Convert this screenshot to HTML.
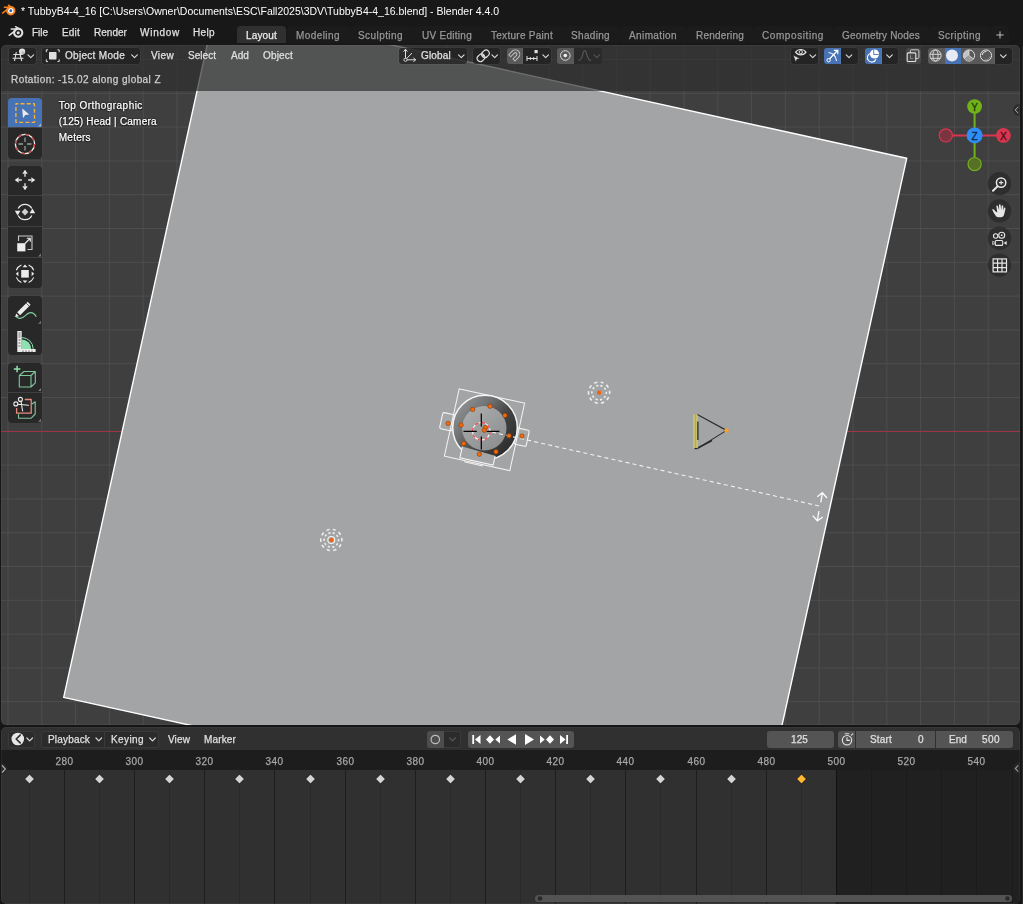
<!DOCTYPE html>
<html><head><meta charset="utf-8"><title>Blender</title>
<style>
*{box-sizing:border-box;margin:0;padding:0}
html,body{width:1023px;height:904px;overflow:hidden;background:#161616}
body{position:relative;font-family:"Liberation Sans",sans-serif;font-size:11px;color:#e0e0e0}
.a{position:absolute}
.t{position:absolute;white-space:nowrap;line-height:14px;height:14px;-webkit-text-stroke:0.25px currentColor}
#title{left:0;top:0;width:1023px;height:22px;background:#181818}
#menubar{left:0;top:22px;width:1023px;height:23px;background:#181818}
#vp{left:1px;top:45px;width:1019px;height:680px;background:#3f3f3f;border-radius:5px;overflow:hidden}
#tl{left:1px;top:727px;width:1019px;height:177px;background:#1d1d1d;border-radius:5px 5px 5px 5px;overflow:hidden}
.btn{position:absolute;background:#282828;border-radius:3px}
#vp::after,#tl::after{content:"";position:absolute;left:0;top:0;right:0;bottom:0;border-radius:5px;box-shadow:inset 0 0 0 1px rgba(255,255,255,0.045);pointer-events:none}
</style></head><body>
<div id="title" class="a"></div>
<div id="menubar" class="a">
<div class="a" style="left:237px;top:4px;width:49px;height:17px;background:#303030;border-radius:4px 4px 0 0"></div>
<div class="a" style="left:287px;top:4px;width:62.5px;height:17px;background:#1b1b1b;border-radius:4px 4px 0 0"></div>
<div class="a" style="left:350px;top:4px;width:62.5px;height:17px;background:#1b1b1b;border-radius:4px 4px 0 0"></div>
<div class="a" style="left:413px;top:4px;width:69.5px;height:17px;background:#1b1b1b;border-radius:4px 4px 0 0"></div>
<div class="a" style="left:483px;top:4px;width:78.5px;height:17px;background:#1b1b1b;border-radius:4px 4px 0 0"></div>
<div class="a" style="left:562px;top:4px;width:57.5px;height:17px;background:#1b1b1b;border-radius:4px 4px 0 0"></div>
<div class="a" style="left:620px;top:4px;width:66.5px;height:17px;background:#1b1b1b;border-radius:4px 4px 0 0"></div>
<div class="a" style="left:687px;top:4px;width:65.5px;height:17px;background:#1b1b1b;border-radius:4px 4px 0 0"></div>
<div class="a" style="left:753px;top:4px;width:79.5px;height:17px;background:#1b1b1b;border-radius:4px 4px 0 0"></div>
<div class="a" style="left:833px;top:4px;width:95.5px;height:17px;background:#1b1b1b;border-radius:4px 4px 0 0"></div>
<div class="a" style="left:929px;top:4px;width:60.5px;height:17px;background:#1b1b1b;border-radius:4px 4px 0 0"></div>
<div class="a" style="left:990px;top:4px;width:19px;height:17px;background:#1b1b1b;border-radius:4px 4px 0 0"></div>
<svg class="a" style="left:0;top:-22px" width="1023" height="45" viewBox="0 0 1023 45" fill="none"><g transform="translate(18.2 32.7) scale(1.0)"><circle cx="0" cy="0" r="4.1" stroke="#e0e0e0" stroke-width="2.1" fill="none"/><circle cx="0" cy="0" r="1.55" fill="#e0e0e0"/><path d="M-7 -3.7H-1.2M-9 2.6L-2.3 -2.6M-2.6 -6L1.6 -3.3" stroke="#e0e0e0" stroke-width="1.5" stroke-linecap="round"/></g><g transform="translate(10.8 10.7) scale(0.92)"><circle cx="0" cy="0" r="4.1" stroke="#f5821e" stroke-width="2.1" fill="#ffffff"/><circle cx="0" cy="0" r="1.55" fill="#2b62b5"/><path d="M-7 -3.7H-1.2M-9 2.6L-2.3 -2.6M-2.6 -6L1.6 -3.3" stroke="#f5821e" stroke-width="1.5" stroke-linecap="round"/></g><path d="M996.4 35H1003.6M1000 31.4V38.6" stroke="#c0c0c0" stroke-width="1"/></svg>
</div>
<div id="vp" class="a">
<svg class="a" style="left:0;top:0" width="1019" height="680" viewBox="1 45 1019 680">
<g stroke="#4e4e4e" stroke-width="1"><line x1="8.0" y1="45" x2="8.0" y2="725"/><line x1="41.8" y1="45" x2="41.8" y2="725"/><line x1="75.6" y1="45" x2="75.6" y2="725"/><line x1="109.4" y1="45" x2="109.4" y2="725"/><line x1="143.2" y1="45" x2="143.2" y2="725"/><line x1="177.0" y1="45" x2="177.0" y2="725"/><line x1="210.8" y1="45" x2="210.8" y2="725"/><line x1="244.6" y1="45" x2="244.6" y2="725"/><line x1="278.4" y1="45" x2="278.4" y2="725"/><line x1="312.2" y1="45" x2="312.2" y2="725"/><line x1="346.0" y1="45" x2="346.0" y2="725"/><line x1="379.8" y1="45" x2="379.8" y2="725"/><line x1="413.6" y1="45" x2="413.6" y2="725"/><line x1="447.4" y1="45" x2="447.4" y2="725"/><line x1="481.2" y1="45" x2="481.2" y2="725"/><line x1="515.0" y1="45" x2="515.0" y2="725"/><line x1="548.8" y1="45" x2="548.8" y2="725"/><line x1="582.6" y1="45" x2="582.6" y2="725"/><line x1="616.4" y1="45" x2="616.4" y2="725"/><line x1="650.2" y1="45" x2="650.2" y2="725"/><line x1="684.0" y1="45" x2="684.0" y2="725"/><line x1="717.8" y1="45" x2="717.8" y2="725"/><line x1="751.6" y1="45" x2="751.6" y2="725"/><line x1="785.4" y1="45" x2="785.4" y2="725"/><line x1="819.2" y1="45" x2="819.2" y2="725"/><line x1="853.0" y1="45" x2="853.0" y2="725"/><line x1="886.8" y1="45" x2="886.8" y2="725"/><line x1="920.6" y1="45" x2="920.6" y2="725"/><line x1="954.4" y1="45" x2="954.4" y2="725"/><line x1="988.2" y1="45" x2="988.2" y2="725"/><line x1="1" y1="59.5" x2="1020" y2="59.5"/><line x1="1" y1="93.3" x2="1020" y2="93.3"/><line x1="1" y1="127.1" x2="1020" y2="127.1"/><line x1="1" y1="160.9" x2="1020" y2="160.9"/><line x1="1" y1="194.7" x2="1020" y2="194.7"/><line x1="1" y1="228.5" x2="1020" y2="228.5"/><line x1="1" y1="262.3" x2="1020" y2="262.3"/><line x1="1" y1="296.1" x2="1020" y2="296.1"/><line x1="1" y1="329.9" x2="1020" y2="329.9"/><line x1="1" y1="363.7" x2="1020" y2="363.7"/><line x1="1" y1="397.5" x2="1020" y2="397.5"/><line x1="1" y1="431.3" x2="1020" y2="431.3"/><line x1="1" y1="465.1" x2="1020" y2="465.1"/><line x1="1" y1="498.9" x2="1020" y2="498.9"/><line x1="1" y1="532.7" x2="1020" y2="532.7"/><line x1="1" y1="566.5" x2="1020" y2="566.5"/><line x1="1" y1="600.3" x2="1020" y2="600.3"/><line x1="1" y1="634.1" x2="1020" y2="634.1"/><line x1="1" y1="667.9" x2="1020" y2="667.9"/><line x1="1" y1="701.7" x2="1020" y2="701.7"/></g><line x1="1" y1="431.5" x2="1020" y2="431.5" stroke="#9c3545" stroke-width="1"/>
<polygon points="215.65,6.35 906.7,158.3 754.75,849.35 63.7,697.4" fill="#a3a4a5" stroke="#ffffff" stroke-width="1.4" stroke-linejoin="round"/><defs><linearGradient id="ring" x1="0.1" y1="0.15" x2="0.9" y2="0.85"><stop offset="0" stop-color="#909192"/><stop offset="0.3" stop-color="#707172"/><stop offset="0.6" stop-color="#444444"/><stop offset="1" stop-color="#2c2c2c"/></linearGradient><linearGradient id="disc" x1="0.2" y1="0.1" x2="0.8" y2="0.9"><stop offset="0" stop-color="#a9aaab"/><stop offset="1" stop-color="#8e8f90"/></linearGradient></defs><g transform="rotate(12.4 485 427.5)"><rect x="440.7" y="421.7" width="12.5" height="16.5" rx="1.5" fill="#a6a7a8" stroke="#f4f4f4" stroke-width="1.1"/><rect x="516.6" y="420.9" width="12.5" height="16.5" rx="1.5" fill="#a6a7a8" stroke="#f4f4f4" stroke-width="1.1"/></g><rect x="451.0" y="395.2" width="67" height="69" stroke="#f4f4f4" stroke-width="1" fill="none" transform="rotate(12.4 484.5 429.7)"/><circle cx="485" cy="427.5" r="32.3" fill="url(#ring)" stroke="#f6f6f6" stroke-width="1.5"/><g transform="rotate(12.4 485 427.5)"><path d="M467 451.0V462.5H501V453.0" fill="#a5a6a7" stroke="#f4f4f4" stroke-width="1.1"/><path d="M472 465.5H491" stroke="#f0f0f0" stroke-width="1"/></g><circle cx="484.3" cy="428.2" r="22.2" fill="url(#disc)"/><path d="M485 430.5L819.3 506" stroke="#f2f2f2" stroke-width="1.1" stroke-dasharray="4 3.2"/><circle cx="481.3" cy="431.3" r="8.8" stroke="#f5f5f5" stroke-width="1.2" fill="none"/><circle cx="481.3" cy="431.3" r="8.8" stroke="#f04848" stroke-width="1.3" stroke-dasharray="3.46 3.46" fill="none"/><path d="M463.5 431.3H476.8M486.5 431.3H499.4M481.3 413.5V426.4M481.3 436.6V449.6" stroke="#000" stroke-width="1.2"/><circle cx="448.1" cy="423.4" r="2.2" fill="#f26a0c" stroke="#8a3a08" stroke-width="0.6"/><circle cx="461.1" cy="425" r="2.2" fill="#f26a0c" stroke="#8a3a08" stroke-width="0.6"/><circle cx="472.7" cy="409.4" r="2.2" fill="#f26a0c" stroke="#8a3a08" stroke-width="0.6"/><circle cx="490.1" cy="406.3" r="2.2" fill="#f26a0c" stroke="#8a3a08" stroke-width="0.6"/><circle cx="504.9" cy="415.4" r="2.2" fill="#f26a0c" stroke="#8a3a08" stroke-width="0.6"/><circle cx="509" cy="435.7" r="2.2" fill="#f26a0c" stroke="#8a3a08" stroke-width="0.6"/><circle cx="522" cy="436.1" r="2.2" fill="#f26a0c" stroke="#8a3a08" stroke-width="0.6"/><circle cx="496" cy="451.8" r="2.2" fill="#f26a0c" stroke="#8a3a08" stroke-width="0.6"/><circle cx="479.3" cy="454.2" r="2.2" fill="#f26a0c" stroke="#8a3a08" stroke-width="0.6"/><circle cx="463.8" cy="443.5" r="2.2" fill="#f26a0c" stroke="#8a3a08" stroke-width="0.6"/><circle cx="485.3" cy="427.6" r="2.2" fill="#f26a0c" stroke="#8a3a08" stroke-width="0.6"/><circle cx="484.3" cy="430.2" r="2.2" fill="#f26a0c" stroke="#8a3a08" stroke-width="0.6"/><circle cx="599.1" cy="392.7" r="7.2" stroke="#ededed" stroke-width="1.6" stroke-dasharray="2.26 2.26" stroke-dashoffset="0.00" fill="none" transform="rotate(-80 599.1 392.7)"/><circle cx="599.1" cy="392.7" r="10.6" stroke="#ededed" stroke-width="1.6" stroke-dasharray="3.33 3.33" stroke-dashoffset="0.67" fill="none" transform="rotate(-80 599.1 392.7)"/><circle cx="599.1" cy="392.7" r="2.1" fill="#f2600a"/><circle cx="331.3" cy="540" r="7.2" stroke="#ededed" stroke-width="1.6" stroke-dasharray="2.26 2.26" stroke-dashoffset="0.00" fill="none" transform="rotate(-80 331.3 540)"/><circle cx="331.3" cy="540" r="10.6" stroke="#ededed" stroke-width="1.6" stroke-dasharray="3.33 3.33" stroke-dashoffset="0.67" fill="none" transform="rotate(-80 331.3 540)"/><circle cx="331.3" cy="540" r="3.5" stroke="#f4f4f4" stroke-width="1.1" fill="none"/><circle cx="331.3" cy="540" r="2.1" fill="#f2600a"/><path d="M697.3 414.6L726.5 430.4L697.3 448.6" stroke="#2b2b2b" stroke-width="1.1" fill="none"/><path d="M697.8 448L712 440.5" stroke="#2b2b2b" stroke-width="1.6"/><path d="M694 414.2V448.8M697 414.5V448.8" stroke="#e0d540" stroke-width="1.15"/><path d="M697.9 421.5V440" stroke="#151515" stroke-width="1.1"/><path d="M694.5 448.6H697.5" stroke="#222" stroke-width="1.2"/><circle cx="726.5" cy="430.4" r="2.2" fill="#f5a030"/><path d="M820.8 502.4L822.4 492.9M817.3 496.8L822.4 492.7L827 498" stroke="#fafafa" stroke-width="1.3" fill="none"/><path d="M818.9 511L817.3 520.6M812.8 515.6L817.3 520.8L822.8 517" stroke="#fafafa" stroke-width="1.3" fill="none"/>
</svg>
<div id="hdr" class="a" style="left:0;top:0;width:1019px;height:45.5px;background:rgba(46,46,46,0.69)"></div>
<div class="a" style="left:8px;top:2.5px;width:27px;height:16px;background:rgba(30,30,30,0.72);border-radius:3px;box-shadow:0 0 0 0.6px rgba(255,255,255,0.07);"></div>
<div class="a" style="left:41px;top:2.5px;width:98px;height:16px;background:rgba(30,30,30,0.72);border-radius:3px;box-shadow:0 0 0 0.6px rgba(255,255,255,0.07);"></div>
<div class="a" style="left:397.5px;top:2.5px;width:68px;height:16px;background:rgba(30,30,30,0.72);border-radius:3px;box-shadow:0 0 0 0.6px rgba(255,255,255,0.07);"></div>
<div class="a" style="left:472px;top:2.5px;width:26.5px;height:16px;background:rgba(30,30,30,0.72);border-radius:3px;box-shadow:0 0 0 0.6px rgba(255,255,255,0.07);"></div>
<div class="a" style="left:505.5px;top:2.5px;width:16.5px;height:16px;background:rgba(96,96,96,0.85);border-radius:3px 0 0 3px;"></div>
<div class="a" style="left:522px;top:2.5px;width:28px;height:16px;background:rgba(30,30,30,0.72);border-radius:0 3px 3px 0;box-shadow:0 0 0 0.6px rgba(255,255,255,0.07);"></div>
<div class="a" style="left:556px;top:2.5px;width:16.5px;height:16px;background:rgba(96,96,96,0.85);border-radius:3px 0 0 3px;"></div>
<div class="a" style="left:572.5px;top:2.5px;width:28px;height:16px;background:rgba(34,34,34,0.5);border-radius:0 3px 3px 0;"></div>
<div class="a" style="left:790px;top:2.5px;width:27px;height:16px;background:rgba(30,30,30,0.72);border-radius:3px;box-shadow:0 0 0 0.6px rgba(255,255,255,0.07);"></div>
<div class="a" style="left:823px;top:2.5px;width:17px;height:16px;background:#4772b3;border-radius:3px 0 0 3px;"></div>
<div class="a" style="left:840px;top:2.5px;width:17px;height:16px;background:rgba(30,30,30,0.72);border-radius:0 3px 3px 0;box-shadow:0 0 0 0.6px rgba(255,255,255,0.07);"></div>
<div class="a" style="left:863.5px;top:2.5px;width:17px;height:16px;background:#4772b3;border-radius:3px 0 0 3px;"></div>
<div class="a" style="left:880.5px;top:2.5px;width:16.5px;height:16px;background:rgba(30,30,30,0.72);border-radius:0 3px 3px 0;box-shadow:0 0 0 0.6px rgba(255,255,255,0.07);"></div>
<div class="a" style="left:904.5px;top:2.5px;width:15.5px;height:16px;background:rgba(75,75,75,0.85);border-radius:3px;"></div>
<div class="a" style="left:926.5px;top:2.5px;width:17px;height:16px;background:rgba(96,96,96,0.85);border-radius:3px 0 0 3px;"></div>
<div class="a" style="left:943.5px;top:2.5px;width:16px;height:16px;background:#4772b3;"></div>
<div class="a" style="left:959.5px;top:2.5px;width:34.5px;height:16px;background:rgba(96,96,96,0.85);"></div>
<div class="a" style="left:994px;top:2.5px;width:17px;height:16px;background:rgba(30,30,30,0.72);border-radius:0 3px 3px 0;box-shadow:0 0 0 0.6px rgba(255,255,255,0.07);"></div>
<svg class="a" style="left:0;top:0" width="1019" height="24" viewBox="1 45 1019 24" fill="none"><path d="M28.0 54.9L30.8 57.699999999999996L33.6 54.9" stroke="#d6d6d6" stroke-width="1.2" stroke-linecap="round" stroke-linejoin="round"/><path d="M131.7 54.9L134.5 57.699999999999996L137.3 54.9" stroke="#d6d6d6" stroke-width="1.2" stroke-linecap="round" stroke-linejoin="round"/><path d="M458.5 54.9L461.3 57.699999999999996L464.1 54.9" stroke="#d6d6d6" stroke-width="1.2" stroke-linecap="round" stroke-linejoin="round"/><path d="M491.9 54.9L494.7 57.699999999999996L497.5 54.9" stroke="#d6d6d6" stroke-width="1.2" stroke-linecap="round" stroke-linejoin="round"/><path d="M542.9000000000001 54.9L545.7 57.699999999999996L548.5 54.9" stroke="#d6d6d6" stroke-width="1.2" stroke-linecap="round" stroke-linejoin="round"/><path d="M810.0 54.9L812.8 57.699999999999996L815.5999999999999 54.9" stroke="#d6d6d6" stroke-width="1.2" stroke-linecap="round" stroke-linejoin="round"/><path d="M846.2 54.9L849 57.699999999999996L851.8 54.9" stroke="#d6d6d6" stroke-width="1.2" stroke-linecap="round" stroke-linejoin="round"/><path d="M886.7 54.9L889.5 57.699999999999996L892.3 54.9" stroke="#d6d6d6" stroke-width="1.2" stroke-linecap="round" stroke-linejoin="round"/><path d="M1000.5 54.9L1003.3 57.699999999999996L1006.0999999999999 54.9" stroke="#d6d6d6" stroke-width="1.2" stroke-linecap="round" stroke-linejoin="round"/><path d="M594.0 54.9L596.8 57.699999999999996L599.5999999999999 54.9" stroke="#555" stroke-width="1.2" stroke-linecap="round" stroke-linejoin="round"/><path d="M13.3 54.5H22M12.5 58.3H23.5M16.3 52L14.5 61M20 54L21.7 61" stroke="#e0e0e0" stroke-width="1.1"/><circle cx="22.1" cy="51.6" r="3.1" fill="#e0e0e0"/><circle cx="23" cy="52.6" r="1.7" fill="#bdbdbd"/><rect x="49" y="52" width="7.5" height="7.5" rx="0.8" fill="#e0e0e0"/><path d="M48 49.8H46.3V52.2M57.5 49.8H59.2V52.2M48 61.6H46.3V59.3M57.5 61.6H59.2V59.3" stroke="#e0e0e0" stroke-width="1"/><path d="M405.5 49.5V59.8H415.5M405.5 59.8L412 53" stroke="#e0e0e0" stroke-width="1"/><path d="M403.6 51.6L405.5 49.2L407.4 51.6M413.4 57.9L415.8 59.8L413.4 61.7" stroke="#e0e0e0" stroke-width="1" stroke-linejoin="round"/><circle cx="405.5" cy="59.8" r="1.6" fill="#282828" stroke="#e0e0e0" stroke-width="0.9"/><g transform="rotate(-42 483.3 55.9)" stroke="#e0e0e0" stroke-width="1.15"><rect x="476.3" y="52.6" width="8" height="6.4" rx="3.2"/><rect x="482.3" y="52.6" width="8" height="6.4" rx="3.2"/></g><circle cx="483.3" cy="55.6" r="1.1" fill="#e0e0e0"/><g transform="translate(514.8 54.9) rotate(-45)"><path d="M-4.2 -4.4H0.8A4.4 4.4 0 0 1 0.8 4.4H-4.2V1.6H0.8A1.6 1.6 0 0 0 0.8 -1.6H-4.2Z" stroke="#c4c4c4" stroke-width="1" fill="none" stroke-linejoin="round"/></g><path d="M527 58.5H537M527 56V61M530.3 57V60M533.7 57V60M537 56V61" stroke="#e0e0e0" stroke-width="1"/><rect x="534.5" y="50" width="3.2" height="3.2" fill="#e0e0e0"/><circle cx="565.3" cy="55.5" r="4.8" stroke="#d8d8d8" stroke-width="1"/><circle cx="565.3" cy="55.5" r="1.8" fill="#f0f0f0"/><path d="M578.5 60.5C583 60.5 582.5 50.5 584.7 50.5C587 50.5 586.5 60.5 591 60.5" stroke="#5a5a5a" stroke-width="1.1"/><path d="M795.6 52.2C798 48.6 803.6 48.6 806 52.2C803.6 55.8 798 55.8 795.6 52.2Z" stroke="#e0e0e0" stroke-width="1.2"/><circle cx="800.8" cy="52.1" r="1.6" stroke="#e0e0e0" stroke-width="1" fill="none"/><path d="M793.2 55.3L800 58.4L796.9 59.2L795.8 62Z" fill="#e0e0e0" stroke="#282828" stroke-width="0.5"/><path d="M828.5 60L837.5 50.5M837.8 54.3V50.3H833.8" stroke="#fff" stroke-width="1.2"/><path d="M828.5 52.5C833 53 836 56.5 836.5 61" stroke="#fff" stroke-width="1.1"/><circle cx="828.6" cy="60.2" r="1.7" fill="#4772b3" stroke="#fff" stroke-width="1"/><circle cx="874.5" cy="54" r="4.6" fill="#fff"/><path d="M870.8 53.2A4.5 4.5 0 1 0 876 59.3" stroke="#fff" stroke-width="1.1"/><path d="M873.7 49.7V54.5H878.7" stroke="#4772b3" stroke-width="0.9"/><rect x="910.3" y="49.8" width="8.6" height="8.6" rx="1" stroke="#d0d0d0" stroke-width="1"/><rect x="907.2" y="52.9" width="8.6" height="8.6" rx="1" fill="#474747" stroke="#e0e0e0" stroke-width="1.1"/><path d="M910.5 55.5V58.6H913.5" stroke="#cfcfcf" stroke-width="0.8" stroke-dasharray="1.2 0.8"/><circle cx="935.5" cy="55.5" r="5.6" stroke="#e0e0e0" stroke-width="1"/><path d="M930 54.3H941M930.8 58.3H940.2" stroke="#e0e0e0" stroke-width="0.9"/><ellipse cx="935.5" cy="55.5" rx="2.6" ry="5.6" stroke="#e0e0e0" stroke-width="0.9"/><circle cx="952" cy="55.5" r="6" fill="#e6eaf4"/><circle cx="969" cy="55.5" r="5.6" stroke="#e0e0e0" stroke-width="1"/><path d="M969 55.5V49.9A5.6 5.6 0 0 0 964.6 59Z" fill="#c4c4c4"/><path d="M969 55.5L973.5 58.9A5.6 5.6 0 0 1 964.6 59Z" fill="#9a9a9a"/><path d="M969 50V55.5L973.6 59" stroke="#e0e0e0" stroke-width="0.8"/><circle cx="986" cy="55.5" r="5.6" stroke="#e0e0e0" stroke-width="1"/><path d="M982.3 55A3.9 3.9 0 0 1 986.5 51.5" stroke="#e0e0e0" stroke-width="1.1"/><path d="M990 56.5A4 4 0 0 1 985 59.6" stroke="#8c8c8c" stroke-width="1"/></svg>
<div class="a" style="left:7px;top:53.2px;width:34px;height:29.29999999999999px;background:#4772b3;border-radius:4px 4px 0 0;"></div>
<div class="a" style="left:7px;top:83.1px;width:34px;height:30.700000000000017px;background:#282828;border-radius:0 0 4px 4px;"></div>
<div class="a" style="left:7px;top:121.19999999999999px;width:34px;height:28.70000000000001px;background:#282828;border-radius:4px 4px 0 0;"></div>
<div class="a" style="left:7px;top:150.5px;width:34px;height:30.800000000000004px;background:#282828;border-radius:0;"></div>
<div class="a" style="left:7px;top:181.9px;width:34px;height:30.600000000000016px;background:#282828;border-radius:0;"></div>
<div class="a" style="left:7px;top:213.10000000000002px;width:34px;height:30.399999999999977px;background:#282828;border-radius:0 0 4px 4px;"></div>
<div class="a" style="left:7px;top:250.89999999999998px;width:34px;height:28.9px;background:#282828;border-radius:4px 4px 0 0;"></div>
<div class="a" style="left:7px;top:280.4px;width:34px;height:30.100000000000023px;background:#282828;border-radius:0 0 4px 4px;"></div>
<div class="a" style="left:7px;top:318.1px;width:34px;height:28.799999999999976px;background:#282828;border-radius:4px 4px 0 0;"></div>
<div class="a" style="left:7px;top:347.5px;width:34px;height:30.80000000000001px;background:#282828;border-radius:0 0 4px 4px;"></div>
<svg class="a" style="left:0;top:0" width="60" height="400" viewBox="1 45 60 400" fill="none"><path d="M41 123.5V126.5H38Z" fill="#9db6dd"/><path d="M41 253.5V256.5H38Z" fill="#777"/><path d="M41 320.79999999999995V323.79999999999995H38Z" fill="#777"/><path d="M41 387.9V390.9H38Z" fill="#777"/><path d="M41 418.7V421.7H38Z" fill="#777"/><rect x="15.9" y="103.8" width="18.6" height="18.6" rx="0.4" stroke="#f4b13a" stroke-width="1.4" stroke-dasharray="4 2.2" stroke-dashoffset="2"/><path d="M22.2 108.6L29.3 114.6L25.2 115L23 118.2Z" fill="#ececec"/><circle cx="25" cy="144" r="9.6" stroke="#f0f0f0" stroke-width="1.3"/><circle cx="25" cy="144" r="9.6" stroke="#c4453f" stroke-width="1.4" stroke-dasharray="3.77 3.77"/><path d="M25 137.5V142M25 146V150.5M18.5 144H23M27 144H31.5" stroke="#9a9a9a" stroke-width="1.3"/><g transform="rotate(0 25 180)"><path d="M25 176.8V174" stroke="#ececec" stroke-width="1.3"/><path d="M22.3 173.7L25 169.7L27.7 173.7Z" fill="#ececec"/></g><g transform="rotate(90 25 180)"><path d="M25 176.8V174" stroke="#ececec" stroke-width="1.3"/><path d="M22.3 173.7L25 169.7L27.7 173.7Z" fill="#ececec"/></g><g transform="rotate(180 25 180)"><path d="M25 176.8V174" stroke="#ececec" stroke-width="1.3"/><path d="M22.3 173.7L25 169.7L27.7 173.7Z" fill="#ececec"/></g><g transform="rotate(270 25 180)"><path d="M25 176.8V174" stroke="#ececec" stroke-width="1.3"/><path d="M22.3 173.7L25 169.7L27.7 173.7Z" fill="#ececec"/></g><path d="M18.2 208.5A7.6 7.6 0 0 1 31.8 208.5M31.8 215.5A7.6 7.6 0 0 1 18.2 215.5" stroke="#ececec" stroke-width="1.3"/><path d="M25 208.6L28.4 212L25 215.4L21.6 212Z" fill="#d0d0d0"/><path d="M29.6 213.2L32.4 208.6L35.2 213.2Z" fill="#ececec"/><path d="M14.8 210.8L17.6 215.4L20.4 210.8Z" fill="#ececec"/><rect x="17.2" y="243.2" width="8.2" height="8.2" fill="#ececec"/><path d="M18.5 241V236H32V249.5H27.5" stroke="#c8c8c8" stroke-width="1.1"/><path d="M25 243.5L30 238.5M26.8 238.2H30.3V241.7" stroke="#ececec" stroke-width="1.1"/><rect x="21.2" y="270" width="7.6" height="7.6" fill="#ececec"/><g transform="rotate(0 25 273.8)"><path d="M22.6 267.2L25 264.6L27.4 267.2Z" fill="#ececec"/><path d="M28.6 265.1A9.3 9.3 0 0 1 33.7 270.2" stroke="#ececec" stroke-width="1.1"/></g><g transform="rotate(90 25 273.8)"><path d="M22.6 267.2L25 264.6L27.4 267.2Z" fill="#ececec"/><path d="M28.6 265.1A9.3 9.3 0 0 1 33.7 270.2" stroke="#ececec" stroke-width="1.1"/></g><g transform="rotate(180 25 273.8)"><path d="M22.6 267.2L25 264.6L27.4 267.2Z" fill="#ececec"/><path d="M28.6 265.1A9.3 9.3 0 0 1 33.7 270.2" stroke="#ececec" stroke-width="1.1"/></g><g transform="rotate(270 25 273.8)"><path d="M22.6 267.2L25 264.6L27.4 267.2Z" fill="#ececec"/><path d="M28.6 265.1A9.3 9.3 0 0 1 33.7 270.2" stroke="#ececec" stroke-width="1.1"/></g><path d="M15.5 316.2C18.5 319.6 22 318.8 25.3 315.6C28.6 312.2 33 310.6 36.3 316.8" stroke="#7fcf9f" stroke-width="1.2"/><path d="M17.2 312.3L27.7 301.8L30.6 304.7L20.1 315.2Z" fill="#ececec"/><path d="M16.2 313.6L19 316.2L15.2 317Z" fill="#ececec"/><path d="M26.3 303.2L29.2 306.1" stroke="#303030" stroke-width="0.8"/><path d="M21.8 349V339.6A9.4 9.4 0 0 1 31.2 349Z" fill="#8fe0b0"/><path d="M22 337.6A11.4 11.4 0 0 1 33.2 348.8" stroke="#8fe0b0" stroke-width="1"/><path d="M17.3 331V352H35.6V349H21.7V331Z" fill="#ececec"/><path d="M18.5 333H20.5M18.5 335H20.5M18.5 337H20.5M18.5 340H20.5M18.5 343H20.5M18.5 346H20.5M23 350.5V352M26 350.5V352M29 350.5V352M32 350.5V352" stroke="#333" stroke-width="0.7"/><path d="M19.3 375.5H31V387H19.3ZM19.3 375.5L24 371.5H35.3L31 375.5M35.3 371.5V382.8L31 387" stroke="#7fc79a" stroke-width="1.1" stroke-linejoin="round"/><path d="M13.8 369H20.4M17.1 365.7V372.3" stroke="#8fe0a8" stroke-width="1.5"/><path d="M32 404L35.2 401.8V414L31 418.3H18.5V414.2" stroke="#7fc79a" stroke-width="1.1" stroke-linejoin="round"/><path d="M24.8 399.5H31.2V413.2H16.6V408" stroke="#e58b7c" stroke-width="1.3" stroke-linejoin="round"/><circle cx="15.8" cy="403.9" r="2" stroke="#ececec" stroke-width="1.1"/><circle cx="20.4" cy="399.4" r="2" stroke="#ececec" stroke-width="1.1"/><path d="M17.6 404.2L28.5 405.2M21 401.3L22.6 411" stroke="#ececec" stroke-width="1.1" stroke-linecap="round"/></svg>
<svg class="a" style="left:0;top:0" width="1019" height="300" viewBox="1 45 1019 300" fill="none" font-family="Liberation Sans, sans-serif"><path d="M974.6 113V135.4" stroke="#70b219" stroke-width="2"/><path d="M974.6 135.4V157" stroke="#70b219" stroke-width="2"/><path d="M953 135.4H974.6" stroke="#d8364f" stroke-width="2"/><path d="M974.6 135.4H996" stroke="#d8364f" stroke-width="2"/><circle cx="945.8" cy="135.4" r="6.6" fill="#7a3541" stroke="#d8364f" stroke-width="1.2"/><circle cx="974.6" cy="164.1" r="6.6" fill="#586f27" stroke="#70b219" stroke-width="1.2"/><circle cx="974.6" cy="106.6" r="7.4" fill="#70b219"/><circle cx="1003.4" cy="135.4" r="7.4" fill="#d8364f"/><circle cx="974.6" cy="135.4" r="8" fill="#2f8ef5"/><text x="974.6" y="111" font-size="10" text-anchor="middle" fill="#24380a" stroke="#24380a" stroke-width="0.3">Y</text><text x="1003.4" y="139.6" font-size="10" text-anchor="middle" fill="#470c17" stroke="#470c17" stroke-width="0.3">X</text><text x="974.6" y="139.6" font-size="10" text-anchor="middle" fill="#0c2748" stroke="#0c2748" stroke-width="0.3">Z</text><circle cx="999.5" cy="183.8" r="11.7" fill="rgba(36,36,36,0.62)"/><circle cx="999.5" cy="210.9" r="11.7" fill="rgba(36,36,36,0.62)"/><circle cx="999.5" cy="238.2" r="11.7" fill="rgba(36,36,36,0.62)"/><circle cx="999.5" cy="265.1" r="11.7" fill="rgba(36,36,36,0.62)"/><g transform="translate(-1.3 0)"><circle cx="1002.4" cy="182.6" r="4.7" stroke="#e6e6e6" stroke-width="1.5"/><path d="M998.8 186.4L994.3 190.8" stroke="#e6e6e6" stroke-width="2" stroke-linecap="round"/><path d="M1000.2 182.6H1004.6M1002.4 180.4V184.8" stroke="#e6e6e6" stroke-width="1.1"/><path d="M996.6 211.2C995.2 209.5 994.3 208.6 993.8 209.3C993.2 210.2 995.5 213.5 997.3 216.2C998.3 217.6 1004 217.6 1004.8 216C1005.8 213.8 1006.6 210.5 1006.7 208.3C1006.7 207.4 1005.4 207.3 1005.2 208.3L1004.7 210.8L1004.5 205.9C1004.5 204.9 1003 204.9 1002.9 205.9L1002.6 210.2L1001.9 204.9C1001.8 203.9 1000.3 204 1000.3 205L1000.4 210.2L999.2 206.1C998.9 205.1 997.5 205.5 997.7 206.5L998.6 212.5Z" fill="#e6e6e6"/><g transform="translate(0 2.2)"><circle cx="997" cy="233.8" r="2.2" stroke="#e6e6e6" stroke-width="1.1"/><circle cx="1003" cy="233" r="3" stroke="#e6e6e6" stroke-width="1.1"/><circle cx="1003" cy="233" r="0.9" fill="#e6e6e6"/><rect x="996.6" y="238.3" width="7.4" height="4.9" rx="1" stroke="#e6e6e6" stroke-width="1.1"/><path d="M1005 240.8L1008 238.9V242.7Z" fill="#e6e6e6"/><path d="M996.2 240.2L994 239.2V242.4L996.2 241.4" stroke="#e6e6e6" stroke-width="0.8"/></g><rect x="994.4" y="258.9" width="13.4" height="13" stroke="#e6e6e6" stroke-width="1.2"/><path d="M998.9 258.9V271.9M1003.3 258.9V271.9M994.4 263.2H1007.8M994.4 267.6H1007.8" stroke="#e6e6e6" stroke-width="1.2"/></g><circle cx="1019" cy="110" r="6" fill="#2b2b2b" opacity="0.8"/><path d="M1018.3 106.8L1015.2 110L1018.3 113.2" stroke="#aaaaaa" stroke-width="1"/></svg>
</div>
<div class="a" style="left:1022px;top:46px;width:1px;height:858px;background:#2b2b2b"></div>
<div id="tl" class="a">
<div class="a" style="left:0px;top:0px;width:1019px;height:23px;background:#303030;"></div>
<div class="a" style="left:0px;top:23px;width:1019px;height:20px;background:#1d1d1d;"></div>
<div class="a" style="left:0px;top:43px;width:835.5px;height:134px;background:#303030;"></div>
<div class="a" style="left:835.5px;top:43px;width:184px;height:134px;background:#202020;"></div>
<svg class="a" style="left:0;top:0" width="1019" height="177" viewBox="1 727 1019 177"><line x1="29.5" y1="770" x2="29.5" y2="904" stroke="#292929" stroke-width="1"/><line x1="64.5" y1="770" x2="64.5" y2="904" stroke="#1d1d1d" stroke-width="1"/><line x1="99.5" y1="770" x2="99.5" y2="904" stroke="#292929" stroke-width="1"/><line x1="134.5" y1="770" x2="134.5" y2="904" stroke="#1d1d1d" stroke-width="1"/><line x1="169.5" y1="770" x2="169.5" y2="904" stroke="#292929" stroke-width="1"/><line x1="204.5" y1="770" x2="204.5" y2="904" stroke="#1d1d1d" stroke-width="1"/><line x1="239.5" y1="770" x2="239.5" y2="904" stroke="#292929" stroke-width="1"/><line x1="274.5" y1="770" x2="274.5" y2="904" stroke="#1d1d1d" stroke-width="1"/><line x1="310.5" y1="770" x2="310.5" y2="904" stroke="#292929" stroke-width="1"/><line x1="345.5" y1="770" x2="345.5" y2="904" stroke="#1d1d1d" stroke-width="1"/><line x1="380.5" y1="770" x2="380.5" y2="904" stroke="#292929" stroke-width="1"/><line x1="415.5" y1="770" x2="415.5" y2="904" stroke="#1d1d1d" stroke-width="1"/><line x1="450.5" y1="770" x2="450.5" y2="904" stroke="#292929" stroke-width="1"/><line x1="485.5" y1="770" x2="485.5" y2="904" stroke="#1d1d1d" stroke-width="1"/><line x1="520.5" y1="770" x2="520.5" y2="904" stroke="#292929" stroke-width="1"/><line x1="555.5" y1="770" x2="555.5" y2="904" stroke="#1d1d1d" stroke-width="1"/><line x1="590.5" y1="770" x2="590.5" y2="904" stroke="#292929" stroke-width="1"/><line x1="625.5" y1="770" x2="625.5" y2="904" stroke="#1d1d1d" stroke-width="1"/><line x1="660.5" y1="770" x2="660.5" y2="904" stroke="#292929" stroke-width="1"/><line x1="696.5" y1="770" x2="696.5" y2="904" stroke="#1d1d1d" stroke-width="1"/><line x1="731.5" y1="770" x2="731.5" y2="904" stroke="#292929" stroke-width="1"/><line x1="766.5" y1="770" x2="766.5" y2="904" stroke="#1d1d1d" stroke-width="1"/><line x1="801.5" y1="770" x2="801.5" y2="904" stroke="#292929" stroke-width="1"/><line x1="836.5" y1="770" x2="836.5" y2="904" stroke="#111111" stroke-width="1"/><line x1="871.5" y1="770" x2="871.5" y2="904" stroke="#1b1b1b" stroke-width="1"/><line x1="906.5" y1="770" x2="906.5" y2="904" stroke="#1b1b1b" stroke-width="1"/><line x1="941.5" y1="770" x2="941.5" y2="904" stroke="#1b1b1b" stroke-width="1"/><line x1="976.5" y1="770" x2="976.5" y2="904" stroke="#1b1b1b" stroke-width="1"/><line x1="1012.5" y1="770" x2="1012.5" y2="904" stroke="#1b1b1b" stroke-width="1"/><path d="M29.5 774L34.5 779L29.5 784L24.5 779Z" fill="#d4d4d4" stroke="#151515" stroke-width="1"/><path d="M99.5 774L104.5 779L99.5 784L94.5 779Z" fill="#d4d4d4" stroke="#151515" stroke-width="1"/><path d="M169.5 774L174.5 779L169.5 784L164.5 779Z" fill="#d4d4d4" stroke="#151515" stroke-width="1"/><path d="M239.5 774L244.5 779L239.5 784L234.5 779Z" fill="#d4d4d4" stroke="#151515" stroke-width="1"/><path d="M310.5 774L315.5 779L310.5 784L305.5 779Z" fill="#d4d4d4" stroke="#151515" stroke-width="1"/><path d="M380.5 774L385.5 779L380.5 784L375.5 779Z" fill="#d4d4d4" stroke="#151515" stroke-width="1"/><path d="M450.5 774L455.5 779L450.5 784L445.5 779Z" fill="#d4d4d4" stroke="#151515" stroke-width="1"/><path d="M520.5 774L525.5 779L520.5 784L515.5 779Z" fill="#d4d4d4" stroke="#151515" stroke-width="1"/><path d="M590.5 774L595.5 779L590.5 784L585.5 779Z" fill="#d4d4d4" stroke="#151515" stroke-width="1"/><path d="M660.5 774L665.5 779L660.5 784L655.5 779Z" fill="#d4d4d4" stroke="#151515" stroke-width="1"/><path d="M731.5 774L736.5 779L731.5 784L726.5 779Z" fill="#d4d4d4" stroke="#151515" stroke-width="1"/><path d="M801.5 774L806.5 779L801.5 784L796.5 779Z" fill="#fdb733" stroke="#151515" stroke-width="1"/><rect x="535" y="895" width="477" height="7" rx="3.5" fill="#535353"/><circle cx="540" cy="898.5" r="2.3" fill="#2a2a2a"/><circle cx="1007.5" cy="898.5" r="2.3" fill="#2a2a2a"/></svg>
<div class="a" style="left:7px;top:4px;width:27px;height:17px;background:#2b2b2b;border-radius:3px;border:1px solid #3a3a3a;"></div>
<div class="a" style="left:40px;top:4px;width:63.5px;height:17px;background:#2b2b2b;border:1px solid #3a3a3a;border-radius:3px 0 0 3px;"></div>
<div class="a" style="left:103.5px;top:4px;width:54px;height:17px;background:#2b2b2b;border:1px solid #3a3a3a;border-left:none;border-radius:0 3px 3px 0;"></div>
<div class="a" style="left:426px;top:4px;width:16.5px;height:17px;background:#4d4d4d;border-radius:3px 0 0 3px;"></div>
<div class="a" style="left:442.5px;top:4px;width:17.5px;height:17px;background:#2b2b2b;border:1px solid #3a3a3a;border-left:none;border-radius:0 3px 3px 0;"></div>
<div class="a" style="left:466.5px;top:4px;width:106px;height:17px;background:#545454;border-radius:3px;"></div>
<div class="a" style="left:766px;top:4px;width:67px;height:17px;background:#545454;border-radius:3px;"></div>
<div class="a" style="left:837px;top:4px;width:17px;height:17px;background:#545454;border-radius:3px 0 0 3px;"></div>
<div class="a" style="left:855px;top:4px;width:79px;height:17px;background:#545454;"></div>
<div class="a" style="left:935px;top:4px;width:77px;height:17px;background:#545454;border-radius:0 3px 3px 0;"></div>
<svg class="a" style="left:0;top:0" width="1019" height="24" viewBox="1 727 1019 24" fill="none"><circle cx="17.8" cy="739" r="6.3" fill="#e6e6e6"/><path d="M20.2 735.2L16.2 739L20.2 742.8" stroke="#303030" stroke-width="1.7" fill="none" stroke-linecap="round" stroke-linejoin="round"/><path d="M26.9 738.0L29.7 740.8L32.5 738.0" stroke="#d6d6d6" stroke-width="1.2" stroke-linecap="round" stroke-linejoin="round"/><path d="M96.0 738.0L98.8 740.8L101.6 738.0" stroke="#d6d6d6" stroke-width="1.2" stroke-linecap="round" stroke-linejoin="round"/><path d="M149.7 738.0L152.5 740.8L155.3 738.0" stroke="#d6d6d6" stroke-width="1.2" stroke-linecap="round" stroke-linejoin="round"/><path d="M449.7 738.0L452.5 740.8L455.3 738.0" stroke="#5a5a5a" stroke-width="1.2" stroke-linecap="round" stroke-linejoin="round"/><circle cx="435.3" cy="739.5" r="4.2" stroke="#bdbdbd" stroke-width="1.2"/><rect x="472.3" y="735" width="1.8" height="9" fill="#ffffff"/><path d="M480.5 735L475 739.5L480.5 744Z" fill="#ffffff"/><path d="M486 739.5L490 735.3L494 739.5L490 743.7Z" fill="#ffffff"/><path d="M500 735.5L495.3 739.5L500 743.5Z" fill="#ffffff"/><path d="M516 734.3L507.3 739.5L516 744.7Z" fill="#ffffff"/><path d="M525 734L534 739.5L525 745Z" fill="#ffffff"/><path d="M540 735.5L544.7 739.5L540 743.5Z" fill="#ffffff"/><path d="M546 739.5L550 735.3L554 739.5L550 743.7Z" fill="#ffffff"/><path d="M560 735L565.5 739.5L560 744Z" fill="#ffffff"/><rect x="566.2" y="735" width="1.8" height="9" fill="#ffffff"/><circle cx="847" cy="740.2" r="4.7" stroke="#e0e0e0" stroke-width="1.1"/><path d="M847 737.5V740.4H849.6M845.3 733.8H848.7M851.5 735.2L852.8 733.8" stroke="#e0e0e0" stroke-width="1.1" stroke-linecap="round"/></svg>
<svg class="a" style="left:0;top:23px" width="1019" height="40" viewBox="1 750 1019 40" fill="none"><circle cx="1" cy="769" r="6" fill="#2a2a2a"/><path d="M2 765.3L5.3 769L2 772.7" stroke="#bbbbbb" stroke-width="1.1"/><circle cx="1019" cy="768" r="6" fill="#2a2a2a" opacity="0.7"/><path d="M1018.3 765.3L1015.3 768.5L1018.3 771.7" stroke="#999999" stroke-width="1.1"/></svg>
</div>
<div id="txt" class="a" style="left:0;top:0;width:1023px;height:904px;will-change:transform;opacity:0.999">
<span class="t" style="left:21px;top:3.9000000000000004px;color:#ffffff;font-size:11.6px;transform:scaleX(0.9064);transform-origin:0 50%;-webkit-text-stroke:0;">* TubbyB4-4_16 [C:\Users\Owner\Documents\ESC\Fall2025\3DV\TubbyB4-4_16.blend] - Blender 4.4.0</span>
<span class="t" style="left:32px;top:26.299999999999997px;color:#e0e0e0;font-size:10px;letter-spacing:-0.031px;">File</span>
<span class="t" style="left:62px;top:26.299999999999997px;color:#e0e0e0;font-size:10px;letter-spacing:0.191px;">Edit</span>
<span class="t" style="left:94px;top:26.299999999999997px;color:#e0e0e0;font-size:10px;letter-spacing:0.031px;">Render</span>
<span class="t" style="left:140px;top:26.299999999999997px;color:#e0e0e0;font-size:10px;letter-spacing:0.737px;">Window</span>
<span class="t" style="left:193px;top:26.299999999999997px;color:#e0e0e0;font-size:10px;letter-spacing:0.355px;">Help</span>
<span class="t" style="left:246px;top:28.9px;color:#ececec;font-size:10px;letter-spacing:0.161px;">Layout</span>
<span class="t" style="left:296px;top:28.9px;color:#989898;font-size:10px;letter-spacing:0.426px;">Modeling</span>
<span class="t" style="left:358px;top:28.9px;color:#989898;font-size:10px;letter-spacing:0.429px;">Sculpting</span>
<span class="t" style="left:422px;top:28.9px;color:#989898;font-size:10px;letter-spacing:0.275px;">UV Editing</span>
<span class="t" style="left:491px;top:28.9px;color:#989898;font-size:10px;letter-spacing:0.279px;">Texture Paint</span>
<span class="t" style="left:571px;top:28.9px;color:#989898;font-size:10px;letter-spacing:0.328px;">Shading</span>
<span class="t" style="left:629px;top:28.9px;color:#989898;font-size:10px;letter-spacing:0.392px;">Animation</span>
<span class="t" style="left:696px;top:28.9px;color:#989898;font-size:10px;letter-spacing:0.205px;">Rendering</span>
<span class="t" style="left:762px;top:28.9px;color:#989898;font-size:10px;letter-spacing:0.582px;">Compositing</span>
<span class="t" style="left:842px;top:28.9px;color:#989898;font-size:10px;letter-spacing:0.172px;">Geometry Nodes</span>
<span class="t" style="left:938px;top:28.9px;color:#989898;font-size:10px;letter-spacing:0.455px;">Scripting</span>
<span class="t" style="left:65px;top:49.3px;color:#e0e0e0;font-size:10px;letter-spacing:0.300px;">Object Mode</span>
<span class="t" style="left:151px;top:49.3px;color:#e0e0e0;font-size:10px;letter-spacing:0.375px;">View</span>
<span class="t" style="left:188px;top:49.3px;color:#e0e0e0;font-size:10px;letter-spacing:0.034px;">Select</span>
<span class="t" style="left:231px;top:49.3px;color:#e0e0e0;font-size:10px;letter-spacing:0.068px;">Add</span>
<span class="t" style="left:263px;top:49.3px;color:#e0e0e0;font-size:10px;letter-spacing:0.182px;">Object</span>
<span class="t" style="left:421px;top:49.3px;color:#e0e0e0;font-size:10px;letter-spacing:0.182px;">Global</span>
<span class="t" style="left:11px;top:73.3px;color:#d0d0d0;font-size:10px;letter-spacing:0.427px;">Rotation: -15.02 along global Z</span>
<span class="t" style="left:58.8px;top:99.1px;color:#ffffff;font-size:10px;letter-spacing:0.455px;text-shadow:0 0 2px #000,0 1px 1px #000">Top Orthographic</span>
<span class="t" style="left:58.8px;top:115.1px;color:#ffffff;font-size:10px;letter-spacing:0.224px;text-shadow:0 0 2px #000,0 1px 1px #000">(125) Head | Camera</span>
<span class="t" style="left:58.8px;top:131.20000000000002px;color:#ffffff;font-size:10px;letter-spacing:0.240px;text-shadow:0 0 2px #000,0 1px 1px #000">Meters</span>
<span class="t" style="left:48px;top:733.3px;color:#e0e0e0;font-size:10px;letter-spacing:0.178px;">Playback</span>
<span class="t" style="left:111px;top:733.3px;color:#e0e0e0;font-size:10px;letter-spacing:0.404px;">Keying</span>
<span class="t" style="left:168px;top:733.3px;color:#e0e0e0;font-size:10px;letter-spacing:0.125px;">View</span>
<span class="t" style="left:204px;top:733.3px;color:#e0e0e0;font-size:10px;letter-spacing:0.146px;">Marker</span>
<span class="t" style="left:55.5px;top:754.5px;color:#a8a8a8;font-size:10px;letter-spacing:0.438px;">280</span>
<span class="t" style="left:125.5px;top:754.5px;color:#a8a8a8;font-size:10px;letter-spacing:0.438px;">300</span>
<span class="t" style="left:195.5px;top:754.5px;color:#a8a8a8;font-size:10px;letter-spacing:0.438px;">320</span>
<span class="t" style="left:265.5px;top:754.5px;color:#a8a8a8;font-size:10px;letter-spacing:0.438px;">340</span>
<span class="t" style="left:336.5px;top:754.5px;color:#a8a8a8;font-size:10px;letter-spacing:0.438px;">360</span>
<span class="t" style="left:406.5px;top:754.5px;color:#a8a8a8;font-size:10px;letter-spacing:0.438px;">380</span>
<span class="t" style="left:476.5px;top:754.5px;color:#a8a8a8;font-size:10px;letter-spacing:0.438px;">400</span>
<span class="t" style="left:546.5px;top:754.5px;color:#a8a8a8;font-size:10px;letter-spacing:0.438px;">420</span>
<span class="t" style="left:616.5px;top:754.5px;color:#a8a8a8;font-size:10px;letter-spacing:0.438px;">440</span>
<span class="t" style="left:687.5px;top:754.5px;color:#a8a8a8;font-size:10px;letter-spacing:0.438px;">460</span>
<span class="t" style="left:757.5px;top:754.5px;color:#a8a8a8;font-size:10px;letter-spacing:0.438px;">480</span>
<span class="t" style="left:827.5px;top:754.5px;color:#a8a8a8;font-size:10px;letter-spacing:0.438px;">500</span>
<span class="t" style="left:897.5px;top:754.5px;color:#a8a8a8;font-size:10px;letter-spacing:0.438px;">520</span>
<span class="t" style="left:967.5px;top:754.5px;color:#a8a8a8;font-size:10px;letter-spacing:0.438px;">540</span>
<span class="t" style="left:791px;top:733.3px;color:#e0e0e0;font-size:10px;letter-spacing:0.104px;">125</span>
<span class="t" style="left:870px;top:733.3px;color:#e0e0e0;font-size:10px;letter-spacing:0.175px;">Start</span>
<span class="t" style="left:918px;top:733.3px;color:#e0e0e0;font-size:10px;">0</span>
<span class="t" style="left:949px;top:733.3px;color:#e0e0e0;font-size:10px;letter-spacing:0.068px;">End</span>
<span class="t" style="left:982px;top:733.3px;color:#e0e0e0;font-size:10px;letter-spacing:0.438px;">500</span>
</div>
</body></html>
